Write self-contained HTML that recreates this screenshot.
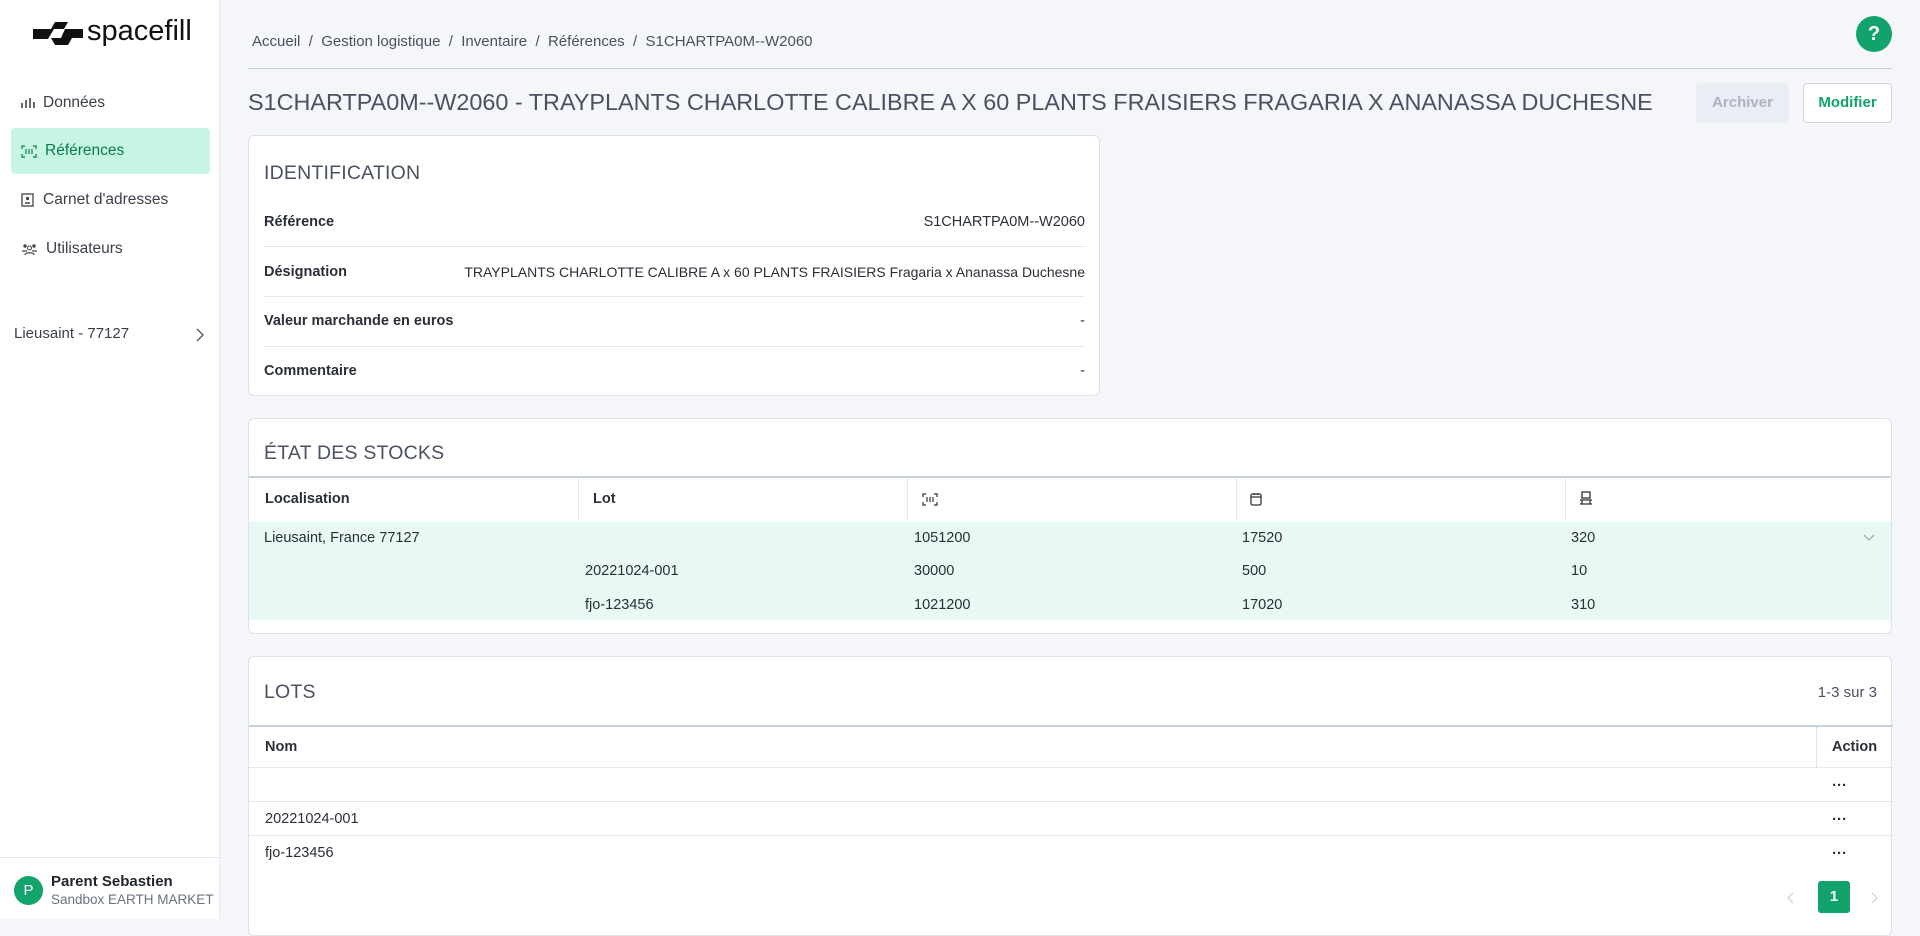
<!DOCTYPE html>
<html><head><meta charset="utf-8"><style>
*{box-sizing:border-box;margin:0;padding:0}
body{width:1920px;height:919px;overflow:hidden;background:#f5f6f9;font-family:"Liberation Sans",sans-serif;color:#2a2f38;font-size:15px;position:relative}
.a{position:absolute}
.side{left:0;top:0;width:220px;height:919px;background:#fff;border-right:1px solid #e6e8ee}
.nav{left:11px;width:199px;height:46px;padding-left:10px;display:flex;align-items:center;font-size:15.5px;color:#3a404b}
.nav svg{margin-right:8px}
.card{background:#fff;border:1px solid #dde1e8;border-radius:6px}
.h{font-size:19.5px;color:#4a5160;letter-spacing:.2px}
.lbl{font-weight:bold;font-size:14.5px;color:#2a2f38}
.row{border-bottom:1px solid #e4e7ec}
.t{font-size:14.5px;color:#2a2f38;white-space:nowrap}
</style></head><body>
<div class="a side">
 <svg class="a" style="left:33px;top:20px" width="50" height="28" viewBox="0 0 50 28"><path d="M0 9h18l4-7h13l-4 7h-10l-6 10h-19z" fill="#111"/><path d="M28 19h-10l4 7h13l4-7h11v-9h-18z" fill="#111" transform="translate(0,-1)"/></svg>
 <div class="a" style="left:87px;top:15px;font-size:29px;color:#111;letter-spacing:0px">spacefill</div>
 <div class="a nav" style="top:80px"><svg width="14" height="12"><path d="M1 11V6M5 11V3M9 11V1M13 11V5" stroke="#444" stroke-width="1.6" fill="none"/></svg>Données</div>
 <div class="a nav" style="top:128px;background:#c6f6e3;border-radius:4px;color:#0b7a4f"><svg width="16" height="13"><path d="M1 4V1h3M12 1h3v3M15 9v3h-3M4 12H1V9M5 4v5M8 4v5M11 4v5" stroke="#0b7a4f" stroke-width="1.2" fill="none"/></svg>Références</div>
 <div class="a nav" style="top:177px"><svg width="14" height="14"><rect x="1" y="1" width="11" height="12" stroke="#444" fill="none" stroke-width="1.3"/><circle cx="6.5" cy="5.5" r="1.6" fill="#444"/><path d="M4 10h5" stroke="#444" stroke-width="1.5"/></svg>Carnet d'adresses</div>
 <div class="a nav" style="top:226px"><svg width="17" height="13"><circle cx="4" cy="3" r="1.7" fill="#444"/><circle cx="13" cy="3" r="1.7" fill="#444"/><circle cx="8.5" cy="5" r="2" fill="none" stroke="#444"/><path d="M1 8h5M11 8h5M4 12c0-3 9-3 9 0" stroke="#444" fill="none" stroke-width="1.3"/></svg>Utilisateurs</div>
 <div class="a" style="left:14px;top:325px;font-size:15px;color:#3a404b">Lieusaint - 77127</div>
 <svg class="a" style="left:196px;top:328px" width="8" height="14"><path d="M1 1l6 6-6 6" stroke="#555" fill="none" stroke-width="1.3"/></svg>
 <div class="a" style="left:0;top:857px;width:220px;border-top:1px solid #dde3ec"></div>
 <div class="a" style="left:14px;top:876px;width:29px;height:29px;border-radius:50%;background:#13a46c;color:#fff;text-align:center;line-height:29px;font-size:15px">P</div>
 <div class="a" style="left:51px;top:873px;font-weight:bold;font-size:15px;color:#1f242c;white-space:nowrap">Parent Sebastien</div>
 <div class="a" style="left:51px;top:892px;font-size:13.5px;color:#6a7180;white-space:nowrap">Sandbox EARTH MARKET</div>
</div>
<div class="a" style="left:252px;top:33px;font-size:15px;color:#4a5160">Accueil &nbsp;/&nbsp; Gestion logistique &nbsp;/&nbsp; Inventaire &nbsp;/&nbsp; Références &nbsp;/&nbsp; S1CHARTPA0M--W2060</div>
<div class="a" style="left:248px;top:68px;width:1644px;border-top:1px solid #c9d1de"></div>
<div class="a" style="left:1856px;top:16px;width:36px;height:36px;border-radius:50%;background:#11a36b;color:#fff;text-align:center;line-height:36px;font-size:20px;font-weight:bold">?</div>
<div class="a" style="left:248px;top:89px;font-size:23.4px;color:#4a5160;white-space:nowrap">S1CHARTPA0M--W2060 - TRAYPLANTS CHARLOTTE CALIBRE A X 60 PLANTS FRAISIERS FRAGARIA X ANANASSA DUCHESNE</div>
<div class="a" style="left:1696px;top:83px;width:93px;height:40px;background:#eaedf4;border-radius:4px;color:#aab2c3;font-weight:bold;text-align:center;line-height:40px;font-size:15px">Archiver</div>
<div class="a" style="left:1803px;top:83px;width:89px;height:40px;background:#fff;border:1px solid #cfd5df;border-radius:4px;color:#11a36b;font-weight:bold;text-align:center;line-height:38px;font-size:15px">Modifier</div>

<div class="a card" style="left:248px;top:135px;width:852px;height:261px">
 <div class="a h" style="left:15px;top:26px">IDENTIFICATION</div>
 <div class="a row" style="left:15px;top:70px;width:821px;height:41px"><span class="a lbl" style="left:0;top:8px">Référence</span><span class="a t" style="right:0;top:8px">S1CHARTPA0M--W2060</span></div>
 <div class="a row" style="left:15px;top:111px;width:821px;height:50px"><span class="a lbl" style="left:0;top:17px">Désignation</span><span class="a t" style="right:0;top:17px;font-size:14px">TRAYPLANTS CHARLOTTE CALIBRE A x 60 PLANTS FRAISIERS Fragaria x Ananassa Duchesne</span></div>
 <div class="a row" style="left:15px;top:161px;width:821px;height:50px"><span class="a lbl" style="left:0;top:16px">Valeur marchande en euros</span><span class="a t" style="right:0;top:16px">-</span></div>
 <div class="a" style="left:15px;top:211px;width:821px;height:49px"><span class="a lbl" style="left:0;top:16px">Commentaire</span><span class="a t" style="right:0;top:16px">-</span></div>
</div>

<div class="a card" style="left:248px;top:418px;width:1644px;height:216px;overflow:hidden">
 <div class="a h" style="left:15px;top:23px">ÉTAT DES STOCKS</div>
 <div class="a" style="left:0;top:57px;width:1644px;height:46px;border-top:2px solid #c9d1de"></div>
 <div class="a lbl" style="left:16px;top:72px">Localisation</div>
 <div class="a" style="left:329px;top:60px;height:41px;border-left:1px dotted #c9d1de"></div>
 <div class="a lbl" style="left:344px;top:72px">Lot</div>
 <div class="a" style="left:658px;top:60px;height:41px;border-left:1px dotted #c9d1de"></div>
 <svg class="a" style="left:673px;top:74px" width="16" height="13"><path d="M1 4V1h3M12 1h3v3M15 9v3h-3M4 12H1V9M5 4v5M8 4v5M11 4v5" stroke="#333" stroke-width="1.2" fill="none"/></svg>
 <div class="a" style="left:987px;top:60px;height:41px;border-left:1px dotted #c9d1de"></div>
 <svg class="a" style="left:1001px;top:73px" width="12" height="14"><rect x="1" y="2" width="10" height="11" rx="1.5" stroke="#333" fill="none" stroke-width="1.3"/><path d="M1 5h10M4 1v2M8 1v2" stroke="#333" stroke-width="1.2"/></svg>
 <div class="a" style="left:1316px;top:60px;height:41px;border-left:1px dotted #c9d1de"></div>
 <svg class="a" style="left:1330px;top:72px" width="14" height="15"><rect x="3" y="1" width="8" height="6" stroke="#333" fill="none" stroke-width="1.3"/><path d="M1 9h12M1 13h12M3 9v4M11 9v4" stroke="#333" stroke-width="1.3"/></svg>
 <div class="a" style="left:0;top:103px;width:1644px;height:98px;background:#e8f8f2"></div>
 <div class="a t" style="left:15px;top:111px">Lieusaint, France 77127</div>
 <div class="a t" style="left:665px;top:111px">1051200</div><div class="a t" style="left:993px;top:111px">17520</div><div class="a t" style="left:1322px;top:111px">320</div>
 <svg class="a" style="left:1614px;top:115px" width="12" height="8"><path d="M1 1l5 5 5-5" stroke="#999" fill="none"/></svg>
 <div class="a t" style="left:336px;top:144px">20221024-001</div><div class="a t" style="left:665px;top:144px">30000</div><div class="a t" style="left:993px;top:144px">500</div><div class="a t" style="left:1322px;top:144px">10</div>
 <div class="a t" style="left:336px;top:178px">fjo-123456</div><div class="a t" style="left:665px;top:178px">1021200</div><div class="a t" style="left:993px;top:178px">17020</div><div class="a t" style="left:1322px;top:178px">310</div>
</div>

<div class="a card" style="left:248px;top:656px;width:1644px;height:280px">
 <div class="a h" style="left:15px;top:24px">LOTS</div>
 <div class="a" style="right:14px;top:27px;font-size:15px;color:#4a5160">1-3 sur 3</div>
 <div class="a" style="left:0;top:68px;width:1644px;height:43px;border-top:2px solid #c9d1de;border-bottom:1px solid #e4e7ec"></div>
 <div class="a lbl" style="left:16px;top:82px">Nom</div>
 <div class="a" style="left:1567px;top:70px;height:40px;border-left:1px dotted #c9d1de"></div>
 <div class="a lbl" style="left:1583px;top:82px">Action</div>
 <div class="a row" style="left:0;top:111px;width:1644px;height:34px"><span class="a" style="left:1583px;top:9px;font-weight:bold">···</span></div>
 <div class="a row" style="left:0;top:145px;width:1644px;height:34px"><span class="a t" style="left:16px;top:9px">20221024-001</span><span class="a" style="left:1583px;top:9px;font-weight:bold">···</span></div>
 <div class="a" style="left:0;top:179px;width:1644px;height:34px"><span class="a t" style="left:16px;top:9px">fjo-123456</span><span class="a" style="left:1583px;top:9px;font-weight:bold">···</span></div>
 <svg class="a" style="left:1538px;top:235px" width="8" height="12"><path d="M6 1L1 6l5 5" stroke="#c4cad6" fill="none"/></svg>
 <div class="a" style="left:1569px;top:224px;width:32px;height:32px;border-radius:3px;background:#11a36b;color:#fff;font-weight:bold;text-align:center;line-height:32px;font-size:15px">1</div>
 <svg class="a" style="left:1621px;top:235px" width="8" height="12"><path d="M2 1l5 5-5 5" stroke="#c4cad6" fill="none"/></svg>
</div>
</body></html>
